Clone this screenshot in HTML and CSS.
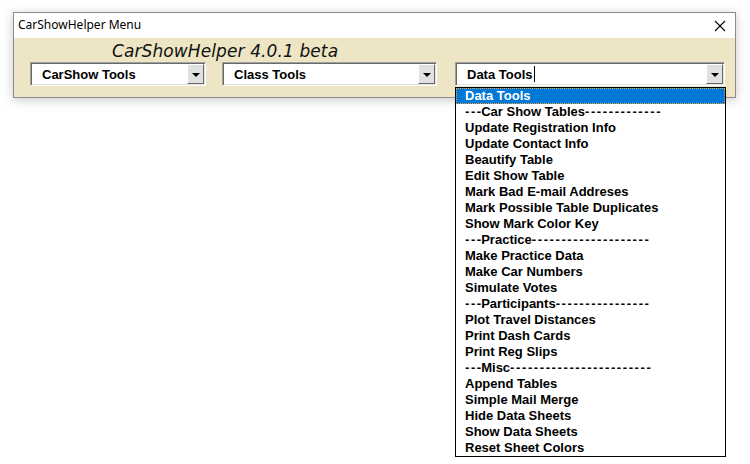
FILE: index.html
```html
<!DOCTYPE html>
<html>
<head>
<meta charset="utf-8">
<link rel="stylesheet" href="styles.css">
</head>
<body>
<div class="window">
  <div class="titlebar">
    <span class="title">CarShowHelper Menu</span>
    <svg class="close" width="12" height="12" viewBox="0 0 12 12"><path d="M1 1L11 11M11 1L1 11" stroke="#000" stroke-width="1.1" fill="none"/></svg>
  </div>
  <div class="panel">
    <div class="brand">CarShowHelper 4.0.1 beta</div>
    <div class="combos">
      <div class="combo c1"><span class="val">CarShow Tools</span><span class="btn"><i></i></span></div>
      <div class="combo c2"><span class="val">Class Tools</span><span class="btn"><i></i></span></div>
      <div class="combo c3"><span class="val">Data Tools<span class="caret"></span></span><span class="btn"><i></i></span>
        <ul class="list">
          <li class="sel">Data Tools</li>
          <li><span class="d">---</span>Car Show Tables<span class="d">-------------</span></li>
          <li>Update Registration Info</li>
          <li>Update Contact Info</li>
          <li>Beautify Table</li>
          <li>Edit Show Table</li>
          <li>Mark Bad E-mail Addreses</li>
          <li>Mark Possible Table Duplicates</li>
          <li>Show Mark Color Key</li>
          <li><span class="d">---</span>Practice<span class="d">--------------------</span></li>
          <li>Make Practice Data</li>
          <li>Make Car Numbers</li>
          <li>Simulate Votes</li>
          <li><span class="d">---</span>Participants<span class="d">----------------</span></li>
          <li>Plot Travel Distances</li>
          <li>Print Dash Cards</li>
          <li>Print Reg Slips</li>
          <li><span class="d">---</span>Misc<span class="d">------------------------</span></li>
          <li>Append Tables</li>
          <li>Simple Mail Merge</li>
          <li>Hide Data Sheets</li>
          <li>Show Data Sheets</li>
          <li>Reset Sheet Colors</li>
        </ul>
      </div>
    </div>
  </div>
</div>
</body>
</html>
```
FILE: styles.css
```css
html, body {
  margin: 0;
  padding: 0;
  background: #fff;
}
body {
  padding: 12px 0 0 13px;
  height: 464px;
  box-sizing: border-box;
  overflow: hidden;
}
.window {
  width: 721px;
  border: 1px solid #8c8c8c;
  box-shadow: 0 2px 10px rgba(0,0,0,0.22);
  background: #fff;
}
.titlebar {
  height: 25px;
  display: flex;
  align-items: center;
  justify-content: space-between;
  padding: 0 9px 0 4px;
  background: #fff;
}
.title {
  font-family: "Noto Sans", "Open Sans", sans-serif;
  font-size: 12px;
  color: #000;
  position: relative;
  top: -1px;
}
.close {
  display: block;
}
.panel {
  background: #eee5c4;
  height: 59px;
  box-sizing: border-box;
  padding: 2px 0 0 16px;
}
.brand {
  font-family: "DejaVu Sans", sans-serif;
  font-style: italic;
  font-size: 17px;
  color: #111;
  padding-left: 82px;
  height: 22px;
  line-height: 22px;
  letter-spacing: 0.1px;
}
.combos {
  display: flex;
  gap: 16px;
}
.combo {
  position: relative;
  height: 24px;
  box-sizing: border-box;
  background: #fff;
  border-top: 1px solid #a0a0a0;
  border-left: 1px solid #a0a0a0;
  border-right: 1px solid #fff;
  border-bottom: 1px solid #fff;
  box-shadow: inset 1px 1px 0 #696969, inset -1px -1px 0 #e3e3e3;
  display: flex;
  align-items: center;
  justify-content: space-between;
  padding: 0 1px 0 11px;
  font-family: "Liberation Sans", Arial, sans-serif;
  font-weight: bold;
  font-size: 13px;
  color: #000;
}
.c1 { width: 176px; }
.c2 { width: 215px; }
.c3 { width: 270px; margin-left: 2px; }
.val {
  display: flex;
  align-items: center;
}
.caret {
  display: inline-block;
  width: 1px;
  height: 16px;
  background: #000;
  margin-left: 1px;
}
.btn {
  width: 17px;
  height: 20px;
  box-sizing: border-box;
  background: #e1e1e1;
  border-top: 1px solid #fff;
  border-left: 1px solid #fff;
  border-right: 1px solid #696969;
  border-bottom: 1px solid #696969;
  display: flex;
  align-items: center;
  justify-content: center;
}
.btn i {
  display: block;
  width: 0;
  height: 0;
  border-left: 4px solid transparent;
  border-right: 4px solid transparent;
  border-top: 4px solid #000;
  margin-top: 1px;
}
.list {
  position: absolute;
  left: -1px;
  top: 24px;
  width: 271px;
  margin: 0;
  padding: 0;
  list-style: none;
  background: #fff;
  border: 1px solid #000;
  box-sizing: border-box;
}
.list li {
  height: 16px;
  line-height: 16px;
  padding-left: 9px;
  white-space: nowrap;
  box-sizing: border-box;
}
.list li .d {
  letter-spacing: 1.6px;
}
.list li .d:first-child {
  margin-right: -1.6px;
}
.list li.sel {
  background: #0078d7;
  color: #fff;
  outline: 1px dotted #f0a040;
  outline-offset: -1px;
}
```
